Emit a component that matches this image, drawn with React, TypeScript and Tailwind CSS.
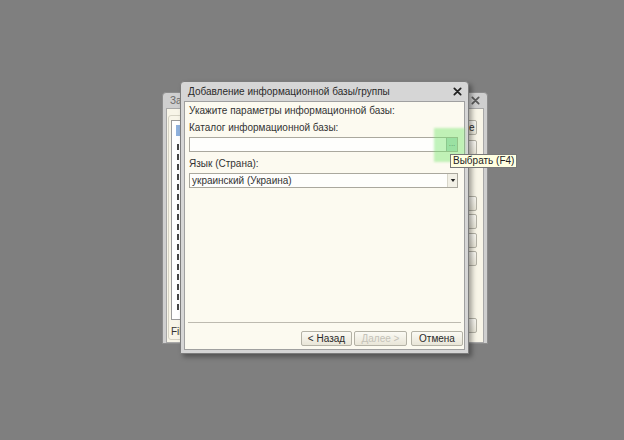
const font = { fontFamily: '"Liberation Sans", Arial, sans-serif' };

const SmallBtn = ({ label, disabled }: { label: string; disabled?: boolean }) => (
  <div
    className={`flex h-[15px] items-center justify-center rounded-[2px] border border-[#b4b2a6] bg-gradient-to-b from-[#fbfaf4] to-[#e9e6d8] text-[10px] leading-none ${
      disabled ? 'text-[#c4c2b8]' : 'text-[#2a2a2a]'
    }`}
  >
    {label}
  </div>
);

const CloseX = ({ className }: { className: string }) => (
  <svg viewBox="0 0 10 10" className={className}>
    <path d="M1.5 1.5 L8.5 8.5 M8.5 1.5 L1.5 8.5" stroke="currentColor" strokeWidth="2" strokeLinecap="round" />
  </svg>
);

// the launcher window that sits behind the dialog
const BackWindow = () => {
  const buttons = [
    { label: '1С:Предприятие', mt: 'mt-[11px]' },
    { label: 'Конфигуратор', mt: 'mt-[5px]' },
    { label: 'Добавить...', mt: 'mt-[41px]' },
    { label: 'Изменить...', mt: 'mt-[3px]' },
    { label: 'Удалить', mt: 'mt-[4px]' },
    { label: 'Настройка...', mt: 'mt-[3px]' },
    { label: 'Выход', mt: 'mt-[52px]' },
  ];
  return (
    <div className="absolute left-[162px] top-[92px] flex h-[252px] w-[326px] flex-col rounded-t-[4px] border border-[#8c8c8c] bg-[#cfcfcf] px-[3px] pb-[3px]">
      <div className="flex h-[17px] items-center justify-between pl-[4px] pr-[4px] text-[10px] text-[#6a6a6a]">
        <span>Запуск 1С:Предприятия</span>
        <CloseX className="h-[9px] w-[9px] text-[#5a5a5a]" />
      </div>
      <div className="flex flex-1 border border-[#a8a8a8] bg-[#f8f5e8]">
        <div className="ml-[1px] mt-[6px] mb-[2px] flex flex-1 flex-col rounded-[3px] border border-[#d6d3c4] px-[2px] pt-[4px]">
          <div className="flex h-[200px] flex-col border border-[#9a9a9a] bg-white pl-[4px] pt-[4px]">
            <div className="h-[11px] w-[200px] bg-[#8fb1dd]" />
            <div className="ml-[1px] mt-[8px] h-[166px] w-0 border-l-2 border-dashed border-[#444]" />
          </div>
          <div className="mt-[4px] text-[10px] text-[#333]">File="D:\1C\Base"</div>
        </div>
        <div className="flex w-[92px] flex-col pl-[4px] pr-[6px]">
          {buttons.map((b) => (
            <div key={b.label} className={b.mt}>
              <SmallBtn label={b.label} />
            </div>
          ))}
        </div>
      </div>
    </div>
  );
};

const FrontWindow = () => (
  <div className="absolute left-[180px] top-[81px] flex h-[273px] w-[289px] flex-col rounded-t-[4px] border border-[#7c7c7c] bg-[#d6d6d6] px-[3px] pb-[3px] shadow-[3px_3px_5px_rgba(0,0,0,0.35)]">
    <div className="flex h-[19px] items-center justify-between pl-[4px] pr-[3px] text-[10px] text-[#2a2a2a]">
      <span>Добавление информационной базы/группы</span>
      <CloseX className="h-[9px] w-[9px] text-[#222]" />
    </div>
    <div className="flex flex-1 flex-col border border-[#a0a0a0] bg-[#fcfaf0] text-[10px] leading-[13px] text-[#333]">
      <div className="mt-[2px] px-[4px]">Укажите параметры информационной базы:</div>
      <div className="mt-[4px] px-[4px]">Каталог информационной базы:</div>
      <div className="mt-[3px] ml-[4px] mr-[6px] flex h-[15px] border border-[#aaa89e] bg-[#fefefc]">
        <div className="flex-1" />
        <div className="flex w-[11px] items-end justify-center border-l border-[#9bb0a6] bg-[#b7dccd] pb-[3px] text-[8px] leading-none text-[#445]">
          ...
        </div>
      </div>
      <div className="mt-[5px] px-[4px]">Язык (Страна):</div>
      <div className="mt-[3px] ml-[4px] mr-[6px] flex h-[15px] items-center border border-[#aaa89e] bg-[#fefefc]">
        <span className="flex-1 pl-[2px]">украинский (Украина)</span>
        <div className="flex h-full w-[10px] items-center justify-center border-l border-[#d8d6ca] bg-[#f2f0e6]">
          <svg viewBox="0 0 6 4" className="h-[3px] w-[6px]">
            <path d="M0 0 L6 0 L3 4 Z" fill="#222" />
          </svg>
        </div>
      </div>
      <div className="flex-1" />
      <div className="mx-[3px] h-0 border-t border-[#bdbab0]" />
      <div className="mt-[8px] mb-[3px] flex justify-end gap-[2px] pr-[1px]">
        <div className="w-[51px]">
          <SmallBtn label="< Назад" />
        </div>
        <div className="w-[53px]">
          <SmallBtn label="Далее >" disabled />
        </div>
        <div className="ml-[2px] w-[52px]">
          <SmallBtn label="Отмена" />
        </div>
      </div>
    </div>
  </div>
);

export default function App() {
  return (
    <div className="relative h-[440px] w-[624px] overflow-hidden bg-[#7f7f7f]" style={font}>
      <BackWindow />
      <FrontWindow />
      {/* click highlight over the "..." button */}
      <div className="absolute left-[434px] top-[128px] h-[34px] w-[31px] bg-[rgba(120,230,110,0.45)] blur-[1px]" />
      <div className="absolute left-[450px] top-[154px] flex h-[14px] items-center border border-[#777] bg-[#ffffe1] px-[2px] text-[10px] leading-none text-[#222]">
        Выбрать (F4)
      </div>
    </div>
  );
}
